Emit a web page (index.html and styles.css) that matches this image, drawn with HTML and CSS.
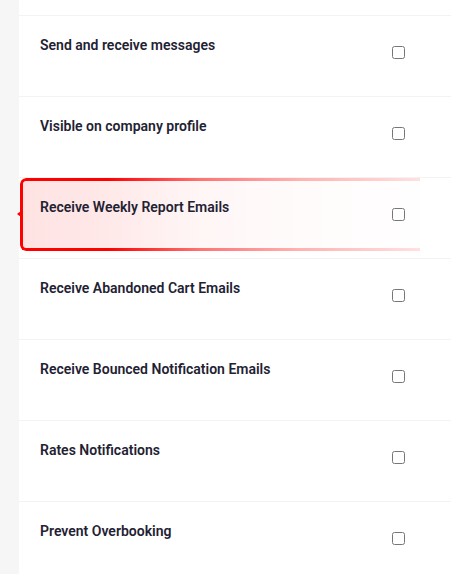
FILE: index.html
```html
<!DOCTYPE html>
<html lang="en">
<head>
<meta charset="utf-8">
<title>Settings</title>
<link rel="stylesheet" href="styles.css">
</head>
<body>
<div class="panel">
  <div class="row-stub"></div>
  <div class="row"><span class="label">Send and receive messages</span><input type="checkbox" class="check"></div>
  <div class="row"><span class="label">Visible on company profile</span><input type="checkbox" class="check"></div>
  <div class="row row-marked"><div class="mark"><div class="mark-box"></div></div><span class="label">Receive Weekly Report Emails</span><input type="checkbox" class="check"></div>
  <div class="row"><span class="label">Receive Abandoned Cart Emails</span><input type="checkbox" class="check"></div>
  <div class="row"><span class="label">Receive Bounced Notification Emails</span><input type="checkbox" class="check"></div>
  <div class="row"><span class="label">Rates Notifications</span><input type="checkbox" class="check"></div>
  <div class="row"><span class="label">Prevent Overbooking</span><input type="checkbox" class="check"></div>
</div>
</body>
</html>
```

FILE: styles.css
```css
html, body {
  margin: 0;
  padding: 0;
  background: #f6f6f6;
  font-family: Roboto, "Liberation Sans", sans-serif;
  overflow: hidden;
}
.panel {
  margin-left: 19px;
  background: #ffffff;
  min-height: 574px;
}
.row-stub {
  height: 15px;
  border-bottom: 1px solid #f3f3f3;
}
.row {
  position: relative;
  display: flex;
  justify-content: space-between;
  align-items: flex-start;
  height: 80px;
  border-bottom: 1px solid #f3f3f3;
  padding: 0 46px 0 21px;
}
.label {
  font-size: 14px;
  font-weight: 600;
  line-height: 20px;
  color: #1f2233;
  margin-top: 19px;
  position: relative;
}
.check {
  width: 13px;
  height: 13px;
  margin: 30px 0 0 0;
  position: relative;
}
.mark {
  position: absolute;
  left: 1px;
  top: 0;
  width: 400px;
  height: 73px;
}
.mark-box {
  box-sizing: border-box;
  width: 100%;
  height: 100%;
  border: 3px solid #ff0000;
  border-right: none;
  border-radius: 6px 0 0 6px;
  background: linear-gradient(to right, #ffe3e3 0%, #ffeeee 45%, #fff6f6 100%);
  -webkit-mask-image: linear-gradient(to right, #000 0%, #000 22%, rgba(0,0,0,0.55) 45%, rgba(0,0,0,0.3) 70%, rgba(0,0,0,0.12) 100%);
  mask-image: linear-gradient(to right, #000 0%, #000 22%, rgba(0,0,0,0.55) 45%, rgba(0,0,0,0.3) 70%, rgba(0,0,0,0.12) 100%);
}
.mark::before {
  content: "";
  position: absolute;
  left: -3px;
  top: 33px;
  width: 4px;
  height: 6px;
  background: #ff0000;
  clip-path: polygon(0 50%, 100% 0, 100% 100%);
}
```
